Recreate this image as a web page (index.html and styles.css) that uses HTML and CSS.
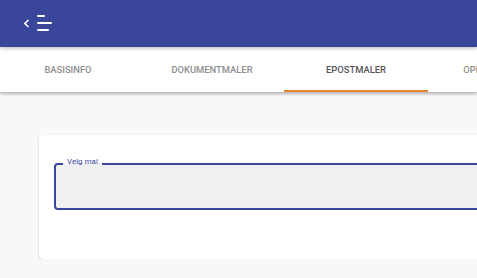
FILE: index.html
```html
<!DOCTYPE html>
<html lang="nb">
<head>
    <meta charset="UTF-8">
    <meta name="viewport" content="width=device-width, initial-scale=1.0">
    <title>Epostmaler</title>
    <link rel="stylesheet" href="styles.css">
</head>
<body>
    <!-- Top app bar -->
    <header class="topbar">
        <button class="menu-toggle" aria-label="Lukk meny">
            <svg width="40" height="47" viewBox="0 0 40 47">
                <polyline points="12.5,20 8.8,23.5 12.5,27" fill="none" stroke="#fff" stroke-width="1.6"/>
                <rect x="21" y="15" width="8" height="2" rx="1" fill="#fff"/>
                <rect x="21" y="22" width="15" height="2" rx="1" fill="#fff"/>
                <rect x="21" y="29" width="12" height="2" rx="1" fill="#fff"/>
            </svg>
        </button>
    </header>

    <!-- Tabs -->
    <nav class="tabs">
        <div class="tab-list">
            <div class="tab">Basisinfo</div>
            <div class="tab">Dokumentmaler</div>
            <div class="tab active">Epostmaler</div>
            <div class="tab">Oppsummering</div>
        </div>
    </nav>

    <main class="content">
        <section class="card">
            <fieldset class="select-field">
                <legend>Velg mal</legend>
                <div class="select-value"></div>
            </fieldset>
        </section>
    </main>
</body>
</html>
```

FILE: styles.css
```css
/* Styling for the page */
body {
    font-family: Roboto, "Noto Sans", Arial, sans-serif;
    margin: 0;
    padding: 0;
    background-color: #f8f8f8;
    overflow: hidden;
}
.topbar {
    position: relative;
    z-index: 2;
    height: 47px;
    background-color: #394699;
    box-shadow: 0 1px 4px rgba(0, 0, 0, 0.3);
    display: flex;
    padding-left: 16px;
}
.menu-toggle {
    background: none;
    border: 0;
    padding: 0;
    margin: 0;
    display: block;
    cursor: pointer;
}
.menu-toggle svg {
    display: block;
}
.tabs {
    position: relative;
    z-index: 1;
    height: 45px;
    background-color: white;
    box-shadow: 0 2px 3px rgba(0, 0, 0, 0.28);
    overflow: hidden;
}
.tab-list {
    display: flex;
    margin-left: -4px;
    height: 100%;
}
.tab {
    flex: 0 0 144px;
    box-sizing: border-box;
    display: flex;
    align-items: center;
    justify-content: center;
    font-size: 9.4px;
    font-weight: 500;
    text-transform: uppercase;
    white-space: nowrap;
    color: #8e8e8e;
    border-bottom: 2px solid transparent;
    padding-top: 2px;
}
.tab.active {
    color: #555;
    border-bottom-color: #e2862c;
}
.content {
    padding: 43px 0 0 39px;
}
.card {
    width: 560px;
    background-color: white;
    border-radius: 4px;
    box-shadow: 0 1px 2px rgba(0, 0, 0, 0.22);
    padding: 22px 16px 49px 15px;
}
.select-field {
    margin: 0;
    padding: 0;
    border: 2px solid #3a4699;
    border-radius: 4px;
    background-color: #f0f0f0;
}
.select-field legend {
    margin-left: 7px;
    padding: 0 4px 5px;
    font-size: 8px;
    color: #3a4699;
}
.select-value {
    height: 37px;
}
```
